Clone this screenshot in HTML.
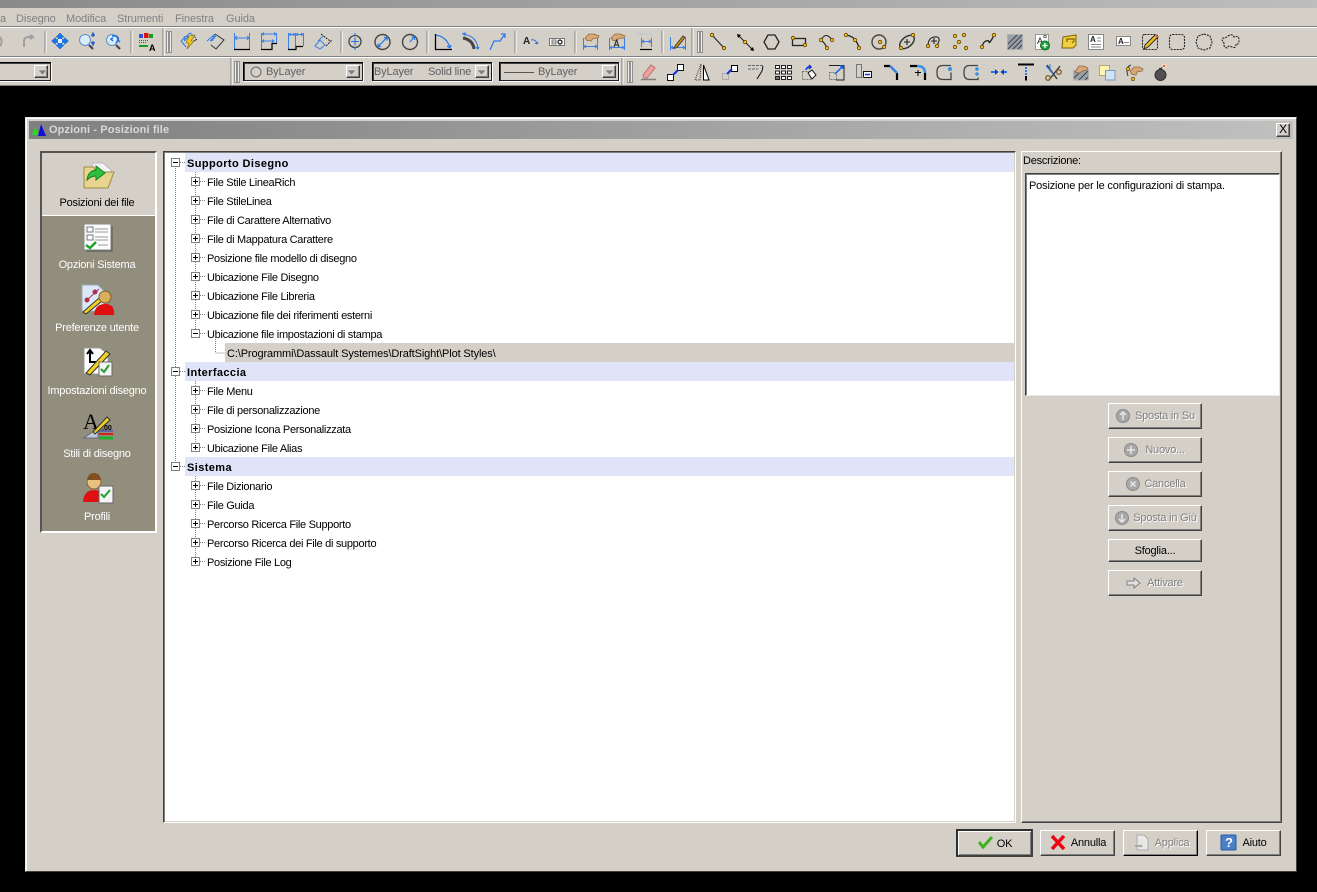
<!DOCTYPE html>
<html><head><meta charset="utf-8"><style>
html,body{margin:0;padding:0;width:1317px;height:892px;overflow:hidden;background:#000}
body{position:relative;font:11px "Liberation Sans",sans-serif;color:#000}
div{position:absolute;box-sizing:border-box}
.t{white-space:nowrap;line-height:13px;height:13px;letter-spacing:-.22px}
.m{color:#808080;top:13px;letter-spacing:-.1px}
.r{left:207px;letter-spacing:-.3px}
.h{left:187px;font-weight:bold;font-size:11px;letter-spacing:.4px}
.band{left:185px;width:829px;height:19px;background:#e0e4f8}
.s{color:#fff;text-align:center;left:41px;width:112px}
.b{background:#d4d0c8;border:1px solid;border-color:#fff #404040 #404040 #fff;box-shadow:inset -1px -1px 0 #808080;text-align:center;letter-spacing:-.2px}
.d{color:#808080;text-shadow:1px 1px 0 #fff}
.c{background:#d4d0c8;border:1px solid;border-color:#000 #202020 #202020 #000;box-shadow:inset 1px 1px 0 #404040,1px 1px 0 #fff,-1px -1px 0 #d4d0c8}
.a{background:#d4d0c8;border:1px solid;border-color:#fff #404040 #404040 #fff;box-shadow:inset -1px -1px 0 #808080;width:14px;top:2px;bottom:2px;right:2px}
.ct{color:#606060;top:66px;letter-spacing:-.15px}
svg{position:absolute;left:0;top:0}
</style></head><body>
<div style="left:0;top:0;width:1317px;height:8px;background:linear-gradient(90deg,#8a8a8a,#bdbdbd)"></div>
<div style="left:0;top:8px;width:1317px;height:78px;background:#d4d0c8"></div>
<div style="left:0;top:26px;width:1317px;height:2px;background:linear-gradient(#808080 50%,#fff 50%)"></div>
<div style="left:0;top:56px;width:1317px;height:2px;background:linear-gradient(#808080 50%,#fff 50%)"></div>
<div style="left:0;top:85px;width:1317px;height:1px;background:#808080"></div>
<div class="t m" style="left:0">a</div><div class="t m" style="left:16px">Disegno</div><div class="t m" style="left:66px">Modifica</div><div class="t m" style="left:117px">Strumenti</div><div class="t m" style="left:175px">Finestra</div><div class="t m" style="left:226px">Guida</div>

<div class="c" style="left:-4px;top:62px;width:55px;height:19px"><div class="a"></div></div>
<div class="c" style="left:243px;top:62px;width:120px;height:19px"><div class="a"></div></div>
<div class="c" style="left:372px;top:62px;width:120px;height:19px"><div class="a"></div></div>
<div class="c" style="left:499px;top:62px;width:120px;height:19px"><div class="a"></div></div>
<div class="t ct" style="left:266px">ByLayer</div>
<div class="t ct" style="left:374px">ByLayer</div><div class="t ct" style="left:428px">Solid line</div>
<div class="t ct" style="left:538px">ByLayer</div>

<svg width="1317" height="100" fill="none" stroke="#000" stroke-width="1">
<g stroke="#808080"><path d="M45 31v22M131 31v22M163 28v28M341 31v22M427 31v22M515 31v22M575 31v22M662 31v22M692 28v28M231 58v27M622 58v27"/></g>
<g stroke="#fff"><path d="M46 31v22M132 31v22M164 28v28M342 31v22M428 31v22M516 31v22M576 31v22M663 31v22M693 28v28M232 58v27M623 58v27"/></g>
<g fill="#f0eee8" stroke="#909090"><rect x="166.500" y="31.500" width="2" height="21"/><rect x="169.500" y="31.500" width="2" height="21"/><rect x="697.500" y="31.500" width="2" height="21"/><rect x="700.500" y="31.500" width="2" height="21"/><rect x="234.500" y="61.500" width="2" height="21"/><rect x="237.500" y="61.500" width="2" height="21"/><rect x="627.500" y="61.500" width="2" height="21"/><rect x="630.500" y="61.500" width="2" height="21"/></g>
<path d="M38 70h9l-4.500 5zM347 70h9l-4.500 5zM477 70h9l-4.500 5zM605 70h9l-4.500 5z" fill="#808080" stroke="#fff" stroke-width=".4"/>
<circle cx="256" cy="72" r="5" fill="#d4d0c8" stroke="#666"/><path d="M504 72.500h30" stroke="#555"/>
<!-- undo redo -->
<path d="M-2 36a6 6 0 0 1 0 11M24 47v-6q0-4 5-4h4m-3-2l3 2-3 2" stroke="#a0a0a0" stroke-width="2"/>
<!-- move -->
<path d="M60 33l4 4h-2v2.500h2.500v-2l4 3.500-4 3.500v-2H62v2.500h2l-4 4-4-4h2v-2.500h-2.500v2l-4-3.500 4-3.500v2H58V37h-2z" fill="#1a78e8" stroke="#0a58c0" stroke-width=".5"/><rect x="58" y="39" width="4" height="4" fill="#e8f0ff" stroke="none"/>
<!-- zoom -->
<g stroke="#5a90c8" fill="#dcebf8"><circle cx="85" cy="40" r="5.500"/><circle cx="112" cy="40" r="5.500"/></g>
<path d="M89 45l4 4M116 45l4 4" stroke="#445" stroke-width="2.200"/><path d="M93 34v3M93 41v3M91.500 36l1.500-3 1.500 3M91.500 42l1.500 3 1.500-3" stroke="#1a5ad0" stroke-width="1.200"/>
<path d="M112 36h4q3 1 2 5M116 43l2-3 2 2M113 38l-2 1 2 2" stroke="#1a70e0" stroke-width="1.500"/>
<!-- layers -->
<g stroke="none"><rect x="139" y="34" width="4" height="4" fill="#3050e0"/><rect x="144" y="33" width="4.500" height="5" fill="#e01010"/><rect x="149" y="34" width="4" height="4" fill="#10a020"/><path d="M139 40h1v1h-1zM141 40h1v1h-1zM143 40h1v1h-1zM145 40h1v1h-1zM147 40h1v1h-1zM139 42h1v1h-1zM141 42h1v1h-1zM143 42h1v1h-1zM145 42h1v1h-1z" fill="#c02020"/><rect x="139" y="45" width="9" height="2" fill="#10a020"/></g>
<text x="149" y="51" font-family="Liberation Sans" font-size="9" font-weight="bold" fill="#000" stroke="none">A</text>
<!-- dims 1 -->
<path d="M181 41l9-8 6 5M186 47l-5-6" stroke="#2a7be8"/><path d="M184 41l5-5M188 36l-4 1 1 4" stroke="#2a7be8"/><path d="M189 36l6-1-4 6h3l-7 8 2-6h-3z" fill="#f0c820" stroke="#806000" stroke-width=".6"/><path d="M194 41l3-2" stroke="#222"/>
<path d="M207 41l8-7" stroke="#2a7be8"/><path d="M210 41l6-5M216 36l-3 0 1 3M210 41l3-1-1-2" stroke="#2a7be8"/><path d="M215 34l9 6-8 9-5-4" stroke="#333"/>
<path d="M234.500 33v16M249.500 33v16M235 38h14M237 36l-2 2 2 2M247 36l2 2-2 2M261.500 33v16M276.500 33v10M262 34h14M262 41h12M264 32.500l-2 1.500 2 1.500M274 32.500l2 1.500-2 1.500M264 39.500l-2 1.500 2 1.500M272 39.500l2 1.500-2 1.500M288.500 33v16M295.500 33v13M303.500 33v13M289 34.500h14M291 33l-2 1.500 2 1.500M293 33l2 1.500-2 1.500M298 33l-2 1.500 2 1.500M301 33l2 1.500-2 1.500" stroke="#3a80e8"/>
<path d="M234 49.500h16M261 49.500h11v-6h5M288 49.500h8v-3h7" stroke="#000" stroke-width="1.200"/>
<path d="M315 46l5-6 5 5-5 4z" stroke="#3a80e8"/><path d="M321 34l9 7" stroke="#222" stroke-dasharray="2 1"/><path d="M326 46l6-6" stroke="#222" stroke-dasharray="2 1"/><path d="M318 41l5-5" stroke="#3a80e8"/>
<!-- circles -->
<circle cx="355" cy="41.500" r="6" stroke="#444" stroke-width="1.300"/><path d="M355 37.500v8M351 41.500h8M355 33v3M355 47v3" stroke="#2a70e8" stroke-width="1.100"/>
<circle cx="382.500" cy="42" r="7.500" stroke="#444" stroke-width="1.400"/><path d="M378 46.500l9-9M378 43.500v3h3M387 40.500v-3h-3" stroke="#2a7be8" stroke-width="1.300"/>
<circle cx="410" cy="42" r="7.500" stroke="#444" stroke-width="1.400"/><path d="M410 42l4-5M411.500 37h3v3" stroke="#2a7be8" stroke-width="1.200"/>
<!-- angle -->
<path d="M435.500 34v15.500H452" stroke="#000" stroke-width="1.300"/><path d="M436 35q11 2 14 13M447 46l3 2 1-3" stroke="#2a7be8" stroke-width="1.300"/>
<path d="M463 38q10 2 11 11" stroke="#444" stroke-width="3"/><path d="M463 34q14 2 15 15M462 34l3-1v3M476 47l2 2 1-2" stroke="#2a7be8" stroke-width="1.100"/><path d="M462 49h-0" />
<path d="M490 50l4-9h6l5-7M505 38v-4h-4" stroke="#2a7be8" stroke-width="1.300"/>
<!-- text & box -->
<text x="523" y="44" font-family="Liberation Sans" font-size="10" font-weight="bold" fill="#222" stroke="none">A</text><path d="M531 40q4-1 6 3M535 43l2 1 1-2" stroke="#2a70e0"/>
<rect x="549.500" y="38.500" width="15" height="7" fill="#fff" stroke="#777"/><path d="M552 40h4v4h-4zM552 42h4" stroke="#777"/><circle cx="560" cy="42" r="2" stroke="#111" stroke-width="1.200"/>
<!-- hands -->
<path d="M583.500 38v12M597.500 38v12M584 46.500h13M586 45l-2 1.500 2 1.500M595 45l2 1.500-2 1.500M609.500 38v12M624.500 38v12M610 47.500h14M612 46l-2 1.500 2 1.500M622 46l2 1.500-2 1.500" stroke="#3a80e8"/>
<path d="M585 38l4-4h5l5 2-1 2-5 .5-2 2.500-4-.5z" fill="#d8a878" stroke="#906840" stroke-width=".8"/>
<path d="M611 38l4-4h5l5 2-1 2-5 .5-2 2.500-4-.5z" fill="#d8a878" stroke="#906840" stroke-width=".8"/><path d="M614 47l2.500-7 2.500 7M615 45h3" stroke="#222"/>
<path d="M636 34h16M641.500 34v15M651.500 34v15" stroke="#b8c4e0"/><path d="M642 41.500h9M644 40l-2 1.500 2 1.500M649 40l2 1.500-2 1.500M641.500 38v9M651.500 38v9" stroke="#3a80e8"/><path d="M640 49.500h12" stroke="#000" stroke-width="1.200"/>
<path d="M670.500 37v13M685.500 37v13M671 47.500h14M673 46l-2 1.500 2 1.500M683 46l2 1.500-2 1.500" stroke="#3a80e8"/><path d="M675 46l8-10 2 1.500-8 10-3 1z" fill="#d09020" stroke="#333" stroke-width=".9"/>
<!-- draw -->
<g stroke="#222" stroke-width="1.100"><path d="M712 35l12 13M738 35l15 15"/><path d="M768 35h7l4 7-4 7h-7l-4-7z" stroke-width="1.300"/><rect x="792.500" y="38.500" width="13" height="7" stroke-width="1.300"/>
<path d="M821 40q5-9 11 0M821 40q4 3 6 8"/><path d="M846 35q7 1 10 6t3 7" stroke-width="1.300"/><circle cx="879" cy="42" r="7" stroke="#444" stroke-width="1.400"/>
<ellipse cx="907" cy="42" rx="5" ry="8.500" transform="rotate(50 907 42)" stroke="#333" stroke-width="1.400"/><path d="M904 42h6M907 39v6"/>
<path d="M928 46q0-8 6-9t5 4l-2 5M931 41h6M934 38v6"/><path d="M982 47q1-5 4-6t3 1 3-3 2-4" stroke-width="1.300"/>
</g>
<g fill="#f0c020" stroke="#604000" stroke-width=".8"><circle cx="712" cy="35" r="1.700"/><circle cx="724" cy="48" r="1.700"/><circle cx="745" cy="42" r="1.700"/><circle cx="793" cy="38" r="1.700"/><circle cx="805" cy="45" r="1.700"/><circle cx="821" cy="40" r="1.700"/><circle cx="832" cy="40" r="1.700"/><circle cx="827" cy="48" r="1.700"/><circle cx="846" cy="35" r="1.700"/><circle cx="855" cy="40" r="1.700"/><circle cx="859" cy="48" r="1.700"/><circle cx="880" cy="42" r="1.700"/><circle cx="884" cy="47" r="1.700"/><circle cx="913" cy="35" r="1.700"/><circle cx="901" cy="48" r="1.700"/><circle cx="928" cy="46" r="1.700"/><circle cx="937" cy="46" r="1.700"/><circle cx="955" cy="36" r="1.700"/><circle cx="964" cy="35" r="1.700"/><circle cx="959" cy="42" r="1.700"/><circle cx="955" cy="47" r="1.700"/><circle cx="966" cy="48" r="1.700"/><circle cx="982" cy="47" r="1.700"/><circle cx="994" cy="35" r="1.700"/></g>
<path d="M737 34l4 1-3 3zM754 51l-4-1 3-3z" fill="#000" stroke="none"/>
<rect x="1007.500" y="34.500" width="15" height="15" fill="#9aa0a8" stroke="#b0b0b0"/><path d="M1008 44l9-9M1008 49l14-14M1013 49l9-9M1018 49l4-4" stroke="#40444c" stroke-width="1"/>
<rect x="1035.500" y="34.500" width="13" height="15" fill="#fff" stroke="#999"/><text x="1037" y="44" font-family="Liberation Sans" font-size="9" fill="#222" stroke="none">A</text><circle cx="1045" cy="36.500" r="1.300" stroke="#666"/><circle cx="1045" cy="45.500" r="4.500" fill="#20a040" stroke="#107020"/><path d="M1042.500 45.500h5M1045 43v5" stroke="#fff" stroke-width="1.300"/>
<path d="M1063 37l13-2v10l-3 3h-11z" fill="#f0d040" stroke="#806000"/><path d="M1067 42v-3h7v2l-2 2" stroke="#806000" stroke-width="1.200"/>
<rect x="1088.500" y="34.500" width="15" height="15" fill="#fff" stroke="#888"/><text x="1090" y="42" font-family="Liberation Sans" font-size="8" font-weight="bold" fill="#222" stroke="none">A</text><path d="M1091 44.500h10M1091 47h10M1097 38h4M1097 41h4" stroke="#888"/>
<rect x="1116.500" y="36.500" width="14" height="9" fill="#fff" stroke="#888"/><text x="1118" y="44" font-family="Liberation Sans" font-size="8" font-weight="bold" fill="#222" stroke="none">A</text><path d="M1124 42.500h5" stroke="#888"/>
<g stroke="#222" stroke-dasharray="2 1" stroke-width="1.100"><rect x="1142.500" y="34.500" width="15" height="15" rx="2"/><rect x="1169.500" y="34.500" width="15" height="15" rx="3"/><path d="M1204 34l6 2 2 6-2 6-6 2-6-2-2-6 2-6z"/><path d="M1228 36q4-3 6 1 5-2 5 3t-3 4q0 5-4 3t-5 1q-4-1-3-5-3-3-1-5 3 0 5-2z"/></g>
<path d="M1144 49l1-4 10-10 3 2-10 10z" fill="#f0c020" stroke="#222" stroke-width=".9"/><path d="M1155 35l3 2" stroke="#e06060" stroke-width="1.500"/>
<!-- row 2 -->
<path d="M643 75l8-10 4 3-8 10h-3z" fill="#f0a0a0" stroke="#c07070"/><path d="M641 79.500h15" stroke="#808080" stroke-width="1.500"/>
<g stroke="#111" fill="#fff"><rect x="667.500" y="74.500" width="6" height="6"/><rect x="677.500" y="64.500" width="6" height="6"/></g><path d="M673 75l5-5" stroke="#1030e0" stroke-width="2"/>
<path d="M701 64l-6 16h5z" stroke="#333" stroke-dasharray="1 1"/><path d="M703.500 65v15h5.500z" fill="#fff" stroke="#000"/>
<rect x="722.500" y="73.500" width="6" height="6" stroke="#888" stroke-dasharray="1 1"/><rect x="731.500" y="65.500" width="6" height="6" fill="#fff"/><path d="M727 74l5-5" stroke="#1030e0" stroke-width="2"/>
<path d="M748 65.500h15M748 69h10" stroke="#666" stroke-dasharray="3 1"/><path d="M763 66l-1 5-5 8" stroke="#111"/>
<g fill="#fff" stroke="#222"><rect x="775.500" y="65.500" width="4" height="3"/><rect x="781.500" y="65.500" width="4" height="3"/><rect x="787.500" y="65.500" width="4" height="3"/><rect x="775.500" y="71" width="4" height="3"/><rect x="781.500" y="71" width="4" height="3"/><rect x="787.500" y="71" width="4" height="3"/><rect x="775.500" y="76.500" width="4" height="3" fill="#777"/><rect x="781.500" y="76.500" width="4" height="3"/><rect x="787.500" y="76.500" width="4" height="3"/></g>
<rect x="802.500" y="71.500" width="8" height="8" stroke="#777" stroke-dasharray="2 1"/><path d="M808 73l4-3 4 5-4 4z" fill="#fff" stroke="#111"/><path d="M806 70q1-4 5-3M809 65l2 2-2 2" stroke="#1030e0" stroke-width="1.500"/>
<path d="M829 65.500h15v14.500h-8" stroke="#222"/><rect x="829.500" y="72.500" width="7" height="7" stroke="#777" stroke-dasharray="2 1"/><path d="M835 74l8-8M840 66h3v3" stroke="#1060e0" stroke-width="1.500"/>
<path d="M856.500 64.500h5v13h-5zM862 71" stroke="#777"/><rect x="863.500" y="71.500" width="8" height="6" fill="#fff" stroke="#111"/><path d="M865 74.500h5" stroke="#1030e0" stroke-width="1.500"/><path d="M861 77.500h3" stroke="#777"/>
<path d="M884 66h6M897 73v7" stroke="#000" stroke-width="2.200"/><path d="M890 66l7 7" stroke="#3a80e0" stroke-width="2.500"/>
<path d="M910 66h7M925 73v7" stroke="#000" stroke-width="2.200"/><path d="M917 66q8 0 8 7" stroke="#3a90e8" stroke-width="2.500"/><path d="M915 72.500h6M918 70v6" stroke="#000"/>
<path d="M951 65.500h-8q-6 0-6 6v2q0 6 6 6h8v-7" stroke="#444" stroke-width="1.300"/><circle cx="950" cy="69" r="2" fill="#3a90e0" stroke="none"/>
<path d="M978 65.500h-8q-6 0-6 6v2q0 6 6 6h8v-2" stroke="#444" stroke-width="1.300"/><circle cx="977" cy="69" r="1.800" fill="#3a90e0" stroke="none"/><circle cx="977" cy="74" r="1.800" fill="#3a90e0" stroke="none"/>
<path d="M991 72h6M1001 72h6" stroke="#2a70e0" stroke-width="2"/><path d="M995 69l3.500 3-3.500 3zM1004 69l-3.500 3 3.500 3z" fill="#1040c0" stroke="none"/>
<path d="M1018 64.500h16" stroke="#000" stroke-width="2"/><path d="M1026 67v8" stroke="#2a80e0" stroke-width="2" stroke-dasharray="2 1"/><path d="M1026 76v4.500" stroke="#000" stroke-width="2"/>
<path d="M1047 65l10 14M1060 66l-11 14" stroke="#333" stroke-width="1.300"/><circle cx="1048" cy="78" r="2.300" stroke="#806020" stroke-width="1.300"/><circle cx="1059" cy="72" r="2.300" stroke="#806020" stroke-width="1.300"/><path d="M1046 66l7 8M1050 64v6" stroke="#3a80e0"/>
<rect x="1073.500" y="70.500" width="15" height="9.500" fill="#9aa0a8" stroke="#b0b0b0"/><path d="M1074 78l8-8M1079 80l9-9M1085 80l3-3" stroke="#40444c"/><path d="M1075 72l4-6h5l4 2-1 2-5 1-2 2z" fill="#d8a878" stroke="#906840" stroke-width=".8"/>
<rect x="1099.500" y="65.500" width="10" height="10" fill="#fff4b0" stroke="#b0a870"/><rect x="1105.500" y="70.500" width="9.500" height="9.500" fill="#d0e4f8" stroke="#8098b8"/>
<path d="M1128 76q-3-9 3-11" stroke="#333"/><path d="M1130 71l4-4h5l4 2-1 2-5 1-1 3-4-.5z" fill="#d8a878" stroke="#906840" stroke-width=".8"/><circle cx="1128" cy="69" r="1.600" fill="#f0c020" stroke="#604000" stroke-width=".7"/><circle cx="1133" cy="79" r="1.600" fill="#f0c020" stroke="#604000" stroke-width=".7"/>
<circle cx="1160.500" cy="75" r="5.500" fill="#505050" stroke="#333"/><rect x="1159" y="68" width="3" height="2" fill="#333" stroke="none"/><path d="M1161 69q1-2 3-3" stroke="#333"/><circle cx="1164" cy="66" r="1.800" fill="#f06010" stroke="#fff" stroke-width=".8"/>
</svg>

<!-- dialog -->
<div style="left:25px;top:117px;width:1272px;height:755px;background:#d4d0c8;border:1px solid;border-color:#e8e8e8 #404040 #404040 #e8e8e8;box-shadow:inset 1px 1px 0 #fff, inset 0 0 0 2px #d4d0c8"></div>
<div style="left:29px;top:121px;width:1264px;height:18px;background:linear-gradient(90deg,#808080,#c0c0c0)"></div>
<div class="t" style="left:49px;top:124px;color:#d8d8d8;font-weight:bold;letter-spacing:.12px">Opzioni - Posizioni file</div>
<div class="b" style="left:1276px;top:123px;width:14px;height:14px;line-height:11px;font-size:12px">X</div>
<svg width="50" height="140" style="left:0;top:0"><path d="M32 135l4-9 2 9z" fill="#20e020"/><path d="M38 136l3-12 5 12z" fill="#1010d0"/></svg>

<!-- sidebar -->
<div style="left:40px;top:151px;width:117px;height:382px;background:#918e7d;border:2px solid;border-color:#555 #fff #fff #555"></div>
<div style="left:42px;top:153px;width:113px;height:63px;background:#d4d0c8;border-bottom:1px solid #fff"></div>
<div class="t s" style="top:197px;color:#000">Posizioni dei file</div>
<div class="t s" style="top:259px">Opzioni Sistema</div>
<div class="t s" style="top:322px">Preferenze utente</div>
<div class="t s" style="top:385px">Impostazioni disegno</div>
<div class="t s" style="top:448px">Stili di disegno</div>
<div class="t s" style="top:511px">Profili</div>
<svg width="160" height="530" fill="none">
<path d="M93 163h10l8 7v12H90z" fill="#f4f4f4" stroke="#bbb"/><path d="M84 167h10l2 5h18l-6 16H84z" fill="#e6d490" stroke="#a08a40"/><path d="M87 180q1-9 9-10v-4l9 7-9 7v-4q-5 0-9 4z" fill="#30c040" stroke="#108020"/>
<rect x="84" y="224" width="27" height="26" fill="#fbfbfb" stroke="#888"/><path d="M112 226v25H86" stroke="#555"/><rect x="87" y="227" width="6" height="5" stroke="#777"/><rect x="87" y="235" width="6" height="5" stroke="#777"/><path d="M95 229h13M95 232h13M95 237h13M95 240h13M98 245h10" stroke="#999"/><path d="M86 245l4 3 6-6" stroke="#20a030" stroke-width="2.500"/>
<path d="M82 285h16l6 6v20H82z" fill="#dce8f8" stroke="#9ab"/><path d="M87 300l12-11" stroke="#a04060"/><circle cx="87" cy="300" r="2.500" fill="#b03050"/><circle cx="95" cy="292" r="2.500" fill="#b03050"/><path d="M83 312l16-14 3 3-16 13z" fill="#f0d020" stroke="#333"/>
<circle cx="105" cy="297" r="6" fill="#d8b060" stroke="#806020"/><path d="M94 315q1-11 11-11t9 11z" fill="#e01010"/>
<path d="M84 348h16l8 6v20H84z" fill="#fff" stroke="#999"/><path d="M90 350v12h10M87 354l3-4 3 4M98 359l3 3-3 3" stroke="#000" stroke-width="2"/><path d="M86 373l20-22 4 3-20 21z" fill="#f0d020" stroke="#333"/><rect x="99" y="362" width="13" height="14" fill="#f4f4f4" stroke="#666"/><path d="M101 369l3 3 5-7" stroke="#20a030" stroke-width="2"/>
<text x="83" y="429" font-family="Liberation Serif" font-size="22" fill="#000">A</text><path d="M84 438l14-10v10z" fill="#c0c8e0" stroke="#667"/><path d="M93 432l14-15 3 3-15 14z" fill="#f0d020" stroke="#333"/><text x="102" y="430" font-family="Liberation Sans" font-size="7" font-weight="bold" fill="#000">.00</text><path d="M99 431h14" stroke="#3040c0"/><path d="M99 434h14" stroke="#d02020" stroke-width="2"/><path d="M99 438h14" stroke="#20b030" stroke-width="3"/>
<circle cx="94" cy="482" r="7" fill="#e8c080" stroke="#906020"/><path d="M87 480q1-7 7-7t7 7z" fill="#805020"/><path d="M83 502q1-12 11-12t11 12z" fill="#e01010"/><rect x="99" y="486" width="14" height="17" fill="#f4f4f4" stroke="#666"/><path d="M101 494l3 3 6-7" stroke="#20a030" stroke-width="2"/>
</svg>

<!-- tree -->
<div style="left:163px;top:151px;width:853px;height:672px;background:#fff;border:1px solid;border-color:#404040 #fff #fff #404040;box-shadow:inset 1px 1px 0 #808080,inset -1px -1px 0 #d4d0c8"></div>
<div class="band" style="top:153px"></div>
<div class="band" style="top:362px"></div>
<div class="band" style="top:457px"></div>
<div style="left:225px;top:343px;width:789px;height:19px;background:#d4d0c8"></div>
<svg width="260" height="580" fill="none" stroke="#808080" stroke-dasharray="1 1" shape-rendering="crispEdges">
<path d="M175.500 168v299M195.500 172v162M195.500 381v67M195.500 476v86M215.500 339v14h9M180 162.500h5M180 371.500h5M180 466.500h5"/>
<path d="M200 181.500h6M200 200.500h6M200 219.500h6M200 238.500h6M200 257.500h6M200 276.500h6M200 295.500h6M200 314.500h6M200 333.500h6M200 390.500h6M200 409.500h6M200 428.500h6M200 447.500h6M200 485.500h6M200 504.500h6M200 523.500h6M200 542.500h6M200 561.500h6"/>
<g stroke-dasharray="none" fill="#fff">
<rect x="171.500" y="158.500" width="8" height="8"/><rect x="171.500" y="367.500" width="8" height="8"/><rect x="171.500" y="462.500" width="8" height="8"/>
<rect x="191.500" y="177.500" width="8" height="8"/><rect x="191.500" y="196.500" width="8" height="8"/><rect x="191.500" y="215.500" width="8" height="8"/><rect x="191.500" y="234.500" width="8" height="8"/><rect x="191.500" y="253.500" width="8" height="8"/><rect x="191.500" y="272.500" width="8" height="8"/><rect x="191.500" y="291.500" width="8" height="8"/><rect x="191.500" y="310.500" width="8" height="8"/><rect x="191.500" y="329.500" width="8" height="8"/>
<rect x="191.500" y="386.500" width="8" height="8"/><rect x="191.500" y="405.500" width="8" height="8"/><rect x="191.500" y="424.500" width="8" height="8"/><rect x="191.500" y="443.500" width="8" height="8"/>
<rect x="191.500" y="481.500" width="8" height="8"/><rect x="191.500" y="500.500" width="8" height="8"/><rect x="191.500" y="519.500" width="8" height="8"/><rect x="191.500" y="538.500" width="8" height="8"/><rect x="191.500" y="557.500" width="8" height="8"/>
</g>
<g stroke="#000" stroke-dasharray="none">
<path d="M173 162.500h5M173 371.500h5M173 466.500h5M193 333.500h5"/>
<path d="M193 181.500h5M195.500 179v5M193 200.500h5M195.500 198v5M193 219.500h5M195.500 217v5M193 238.500h5M195.500 236v5M193 257.500h5M195.500 255v5M193 276.500h5M195.500 274v5M193 295.500h5M195.500 293v5M193 314.500h5M195.500 312v5"/>
<path d="M193 390.500h5M195.500 388v5M193 409.500h5M195.500 407v5M193 428.500h5M195.500 426v5M193 447.500h5M195.500 445v5"/>
<path d="M193 485.500h5M195.500 483v5M193 504.500h5M195.500 502v5M193 523.500h5M195.500 521v5M193 542.500h5M195.500 540v5M193 561.500h5M195.500 559v5"/>
</g></svg>
<div class="t h" style="top:158px">Supporto Disegno</div>
<div class="t r" style="top:177px">File Stile LineaRich</div>
<div class="t r" style="top:196px">File StileLinea</div>
<div class="t r" style="top:215px">File di Carattere Alternativo</div>
<div class="t r" style="top:234px">File di Mappatura Carattere</div>
<div class="t r" style="top:253px">Posizione file modello di disegno</div>
<div class="t r" style="top:272px">Ubicazione File Disegno</div>
<div class="t r" style="top:291px">Ubicazione File Libreria</div>
<div class="t r" style="top:310px">Ubicazione file dei riferimenti esterni</div>
<div class="t r" style="top:329px">Ubicazione file impostazioni di stampa</div>
<div class="t r" style="top:348px;left:227px;letter-spacing:-.12px">C:\Programmi\Dassault Systemes\DraftSight\Plot Styles\</div>
<div class="t h" style="top:367px">Interfaccia</div>
<div class="t r" style="top:386px">File Menu</div>
<div class="t r" style="top:405px">File di personalizzazione</div>
<div class="t r" style="top:424px">Posizione Icona Personalizzata</div>
<div class="t r" style="top:443px">Ubicazione File Alias</div>
<div class="t h" style="top:462px">Sistema</div>
<div class="t r" style="top:481px">File Dizionario</div>
<div class="t r" style="top:500px">File Guida</div>
<div class="t r" style="top:519px">Percorso Ricerca File Supporto</div>
<div class="t r" style="top:538px">Percorso Ricerca dei File di supporto</div>
<div class="t r" style="top:557px">Posizione File Log</div>

<!-- right panel -->
<div style="left:1021px;top:151px;width:261px;height:672px;border:1px solid;border-color:#fff #404040 #404040 #fff;box-shadow:inset -1px -1px 0 #808080"></div>
<div class="t" style="left:1023px;top:155px">Descrizione:</div>
<div style="left:1025px;top:173px;width:255px;height:223px;background:#fff;border:1px solid;border-color:#404040 #e8e8e8 #e8e8e8 #404040;box-shadow:inset 1px 1px 0 #808080"></div>
<div class="t" style="left:1029px;top:180px;letter-spacing:-.17px">Posizione per le configurazioni di stampa.</div>

<div class="b d" style="left:1108px;top:403px;width:94px;height:26px;line-height:25px;padding-left:20px">Sposta in Su</div>
<div class="b d" style="left:1108px;top:437px;width:94px;height:26px;line-height:25px;padding-left:20px">Nuovo...</div>
<div class="b d" style="left:1108px;top:471px;width:94px;height:26px;line-height:25px;padding-left:20px">Cancella</div>
<div class="b d" style="left:1108px;top:505px;width:94px;height:26px;line-height:25px;padding-left:20px">Sposta in Giù</div>
<div class="b" style="left:1108px;top:539px;width:94px;height:23px;line-height:22px">Sfoglia...</div>
<div class="b d" style="left:1108px;top:570px;width:94px;height:26px;line-height:25px;padding-left:20px">Attivare</div>
<div class="b" style="left:956px;top:829px;width:77px;height:28px;line-height:27px;padding-left:20px;border:2px solid #404040;border-top-color:#303030;border-left-color:#303030;box-shadow:inset 1px 1px 0 #fff,inset -1px -1px 0 #808080">OK</div>
<div class="b" style="left:1040px;top:830px;width:75px;height:26px;line-height:25px;padding-left:22px">Annulla</div>
<div class="b d" style="left:1123px;top:830px;width:75px;height:26px;line-height:25px;padding-left:23px;border-right-color:#000;border-bottom-color:#000">Applica</div>
<div class="b" style="left:1206px;top:830px;width:75px;height:26px;line-height:25px;padding-left:22px">Aiuto</div>

<svg width="1317" height="892" fill="none">
<g fill="#a8a8a8" stroke="#8a8a8a" stroke-width="1"><circle cx="1123" cy="416" r="6.500"/><circle cx="1131" cy="450" r="6.500"/><circle cx="1133" cy="484" r="6.500"/><circle cx="1122" cy="518" r="6.500"/></g>
<path d="M1123 420v-7M1120 415l3-3 3 3M1127 450h8M1131 446v8M1130.500 481.500l5 5M1135.500 481.500l-5 5M1122 514v7M1119 519l3 3 3-3" stroke="#e8e8e8" stroke-width="1.500"/>
<path d="M1127 581h7v-3l6 5-6 5v-3h-7z" fill="#e0e0e0" stroke="#808080"/>
<path d="M979 842l4 5 9-10" stroke="#40b020" stroke-width="3"/>
<path d="M1052 836l12 13M1064 836l-12 13" stroke="#f00010" stroke-width="3.500"/>
<path d="M1137 835h7l4 4v11h-11z" fill="#e8e8e8" stroke="#aaa"/><path d="M1135 845h6l-2-2 4 3-4 3 2-2h-6z" fill="#aaa"/>
<rect x="1221" y="835" width="15" height="15" rx="1" fill="#4a80c8" stroke="#2a5aa0"/>
<text x="1225" y="847" font-family="Liberation Sans" font-size="13" font-weight="bold" fill="#fff">?</text>
</svg>
</body></html>
